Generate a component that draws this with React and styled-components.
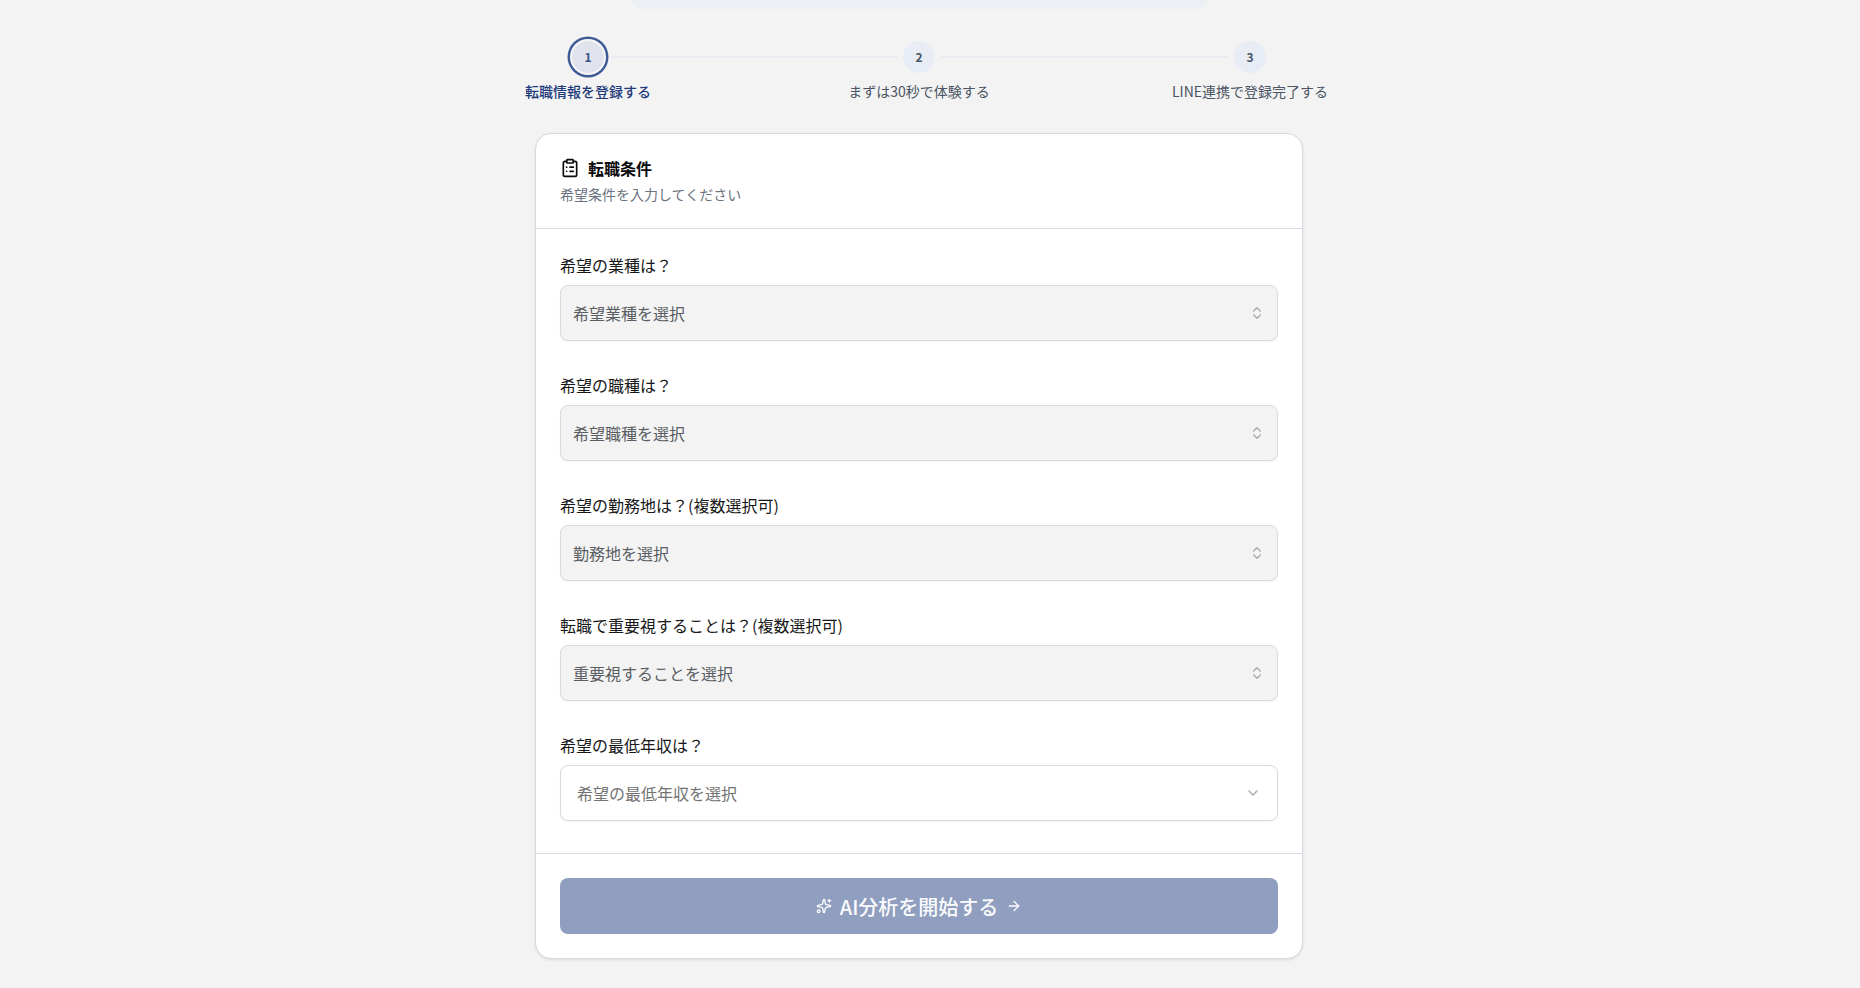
import React from "react";
import styled, { createGlobalStyle } from "styled-components";
import {
  ArrowRight,
  ChevronDown,
  ChevronsUpDown,
  ClipboardList,
  Sparkles,
} from "lucide-react";

const STEPS = ["転職情報を登録する", "まずは30秒で体験する", "LINE連携で登録完了する"];

const FIELDS = [
  { label: "希望の業種は？", placeholder: "希望業種を選択" },
  { label: "希望の職種は？", placeholder: "希望職種を選択" },
  { label: "希望の勤務地は？(複数選択可)", placeholder: "勤務地を選択" },
  { label: "転職で重要視することは？(複数選択可)", placeholder: "重要視することを選択" },
  { label: "希望の最低年収は？", placeholder: "希望の最低年収を選択", plain: true },
];

const GlobalStyle = createGlobalStyle`
  html, body {
    margin: 0;
    overflow: hidden;
    background: #f3f3f3;
  }

  body {
    font-family: "Noto Sans CJK JP", "Noto Sans", sans-serif;
  }

  * {
    box-sizing: border-box;
  }
`;

const Page = styled.div`
  width: 1838px;
  height: 988px;
  display: flex;
  flex-direction: column;
  align-items: center;
`;

const TopBar = styled.div`
  width: 575px;
  height: 9px;
  background: #eceff3;
  border-radius: 0 0 12px 12px;
`;

const Stepper = styled.ol`
  display: flex;
  margin: 32px 0 0;
  padding: 0;
  list-style: none;
`;

const Step = styled.li`
  position: relative;
  width: 331px;
  display: flex;
  flex-direction: column;
  align-items: center;

  &:not(:last-child)::after {
    content: "";
    position: absolute;
    top: 15px;
    left: calc(50% + 22px);
    width: calc(100% - 44px);
    height: 2px;
    background: #e8ebef;
  }
`;

const StepCircle = styled.div`
  width: 32px;
  height: 32px;
  padding-bottom: 1px;
  border-radius: 50%;
  display: flex;
  align-items: center;
  justify-content: center;
  font-size: 12px;
  font-weight: 700;
  background: ${(p) => (p.$active ? "#e0e3ec" : "#e8edf5")};
  color: ${(p) => (p.$active ? "#3a5288" : "#4b5563")};
  box-shadow: ${(p) =>
    p.$active ? "0 0 0 2px #f6f6f7, 0 0 0 4.5px #3f5b96" : "none"};
`;

const StepLabel = styled.span`
  margin-top: 8px;
  font-size: 14px;
  line-height: 20px;
  font-weight: ${(p) => (p.$active ? 500 : 400)};
  color: ${(p) => (p.$active ? "#1e3a7a" : "#4b5563")};
`;

const Card = styled.section`
  width: 768px;
  margin-top: 32px;
  background: #fff;
  border: 1px solid #d5dae3;
  border-radius: 16px;
  box-shadow: 0 1px 3px rgba(0, 0, 0, 0.1);
`;

const CardHeader = styled.header`
  height: 95px;
  padding: 23px 24px 0;
  border-bottom: 1px solid #d5dae3;
`;

const CardTitle = styled.h2`
  margin: 0;
  display: flex;
  align-items: center;
  gap: 8px;
  height: 22px;
  font-size: 16px;
  font-weight: 700;
  color: #0a0a0a;
`;

const CardSubtitle = styled.p`
  margin: 5px 0 0;
  font-size: 14px;
  line-height: 20px;
  color: #6b7280;
`;

const CardBody = styled.div`
  padding: 27px 24px 32px;
  display: flex;
  flex-direction: column;
  gap: 35px;
  border-bottom: 1px solid #d5dae3;
`;

const Field = styled.div`
  display: flex;
  flex-direction: column;
  gap: 11px;
`;

const FieldLabel = styled.label`
  font-size: 16px;
  line-height: 18px;
  color: #171717;
`;

const SelectBox = styled.button`
  width: 100%;
  height: 56px;
  display: flex;
  align-items: center;
  justify-content: space-between;
  padding: 0 ${(p) => (p.$plain ? "16px" : "12px")};
  border: 1px solid #d5dae3;
  border-radius: 8px;
  background: ${(p) => (p.$plain ? "#fff" : "#f3f3f3")};
  color: ${(p) => (p.$plain ? "#737373" : "#5a5e63")};
  font-family: inherit;
  font-size: 16px;
  box-shadow: 0 1px 2px rgba(0, 0, 0, 0.05);

  svg {
    color: #a8a8a8;
    flex-shrink: 0;
  }
`;

const CardFooter = styled.footer`
  padding: 24px;
`;

const SubmitButton = styled.button`
  width: 100%;
  height: 56px;
  display: flex;
  align-items: center;
  justify-content: center;
  gap: 8px;
  border: none;
  border-radius: 8px;
  background: #909fbf;
  color: #fbfbfd;
  font-family: inherit;
  font-size: 20px;
  font-weight: 500;
`;

const App = () => {
  return (
    <Page>
      <GlobalStyle />
      <TopBar />
      <Stepper>
        {STEPS.map((step, index) => (
          <Step key={step}>
            <StepCircle $active={index === 0}>{index + 1}</StepCircle>
            <StepLabel $active={index === 0}>{step}</StepLabel>
          </Step>
        ))}
      </Stepper>
      <Card>
        <CardHeader>
          <CardTitle>
            <ClipboardList size={20} strokeWidth={2} />
            転職条件
          </CardTitle>
          <CardSubtitle>希望条件を入力してください</CardSubtitle>
        </CardHeader>
        <CardBody>
          {FIELDS.map((field) => (
            <Field key={field.label}>
              <FieldLabel>{field.label}</FieldLabel>
              <SelectBox type="button" $plain={field.plain}>
                {field.placeholder}
                {field.plain ? <ChevronDown size={16} /> : <ChevronsUpDown size={16} />}
              </SelectBox>
            </Field>
          ))}
        </CardBody>
        <CardFooter>
          <SubmitButton type="button" disabled>
            <Sparkles size={16} />
            AI分析を開始する
            <ArrowRight size={16} />
          </SubmitButton>
        </CardFooter>
      </Card>
    </Page>
  );
};

export default App;
